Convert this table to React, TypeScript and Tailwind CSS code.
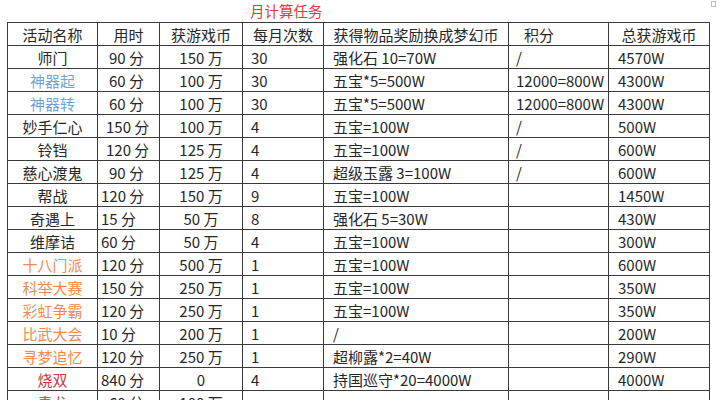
import React from 'react';

type Row = {
  name: string;
  color?: string;
  time: string;
  timePad: string;
  coins: string;
  times: string;
  reward: string;
  points: string;
  total: string;
};

const rows: Row[] = [
  { name: '师门', time: '90 分', timePad: 'pl-[11px]', coins: '150 万', times: '30', reward: '强化石 10=70W', points: '/', total: '4570W' },
  { name: '神器起', color: 'text-[#6fa3d8]', time: '60 分', timePad: 'pl-[11px]', coins: '100 万', times: '30', reward: '五宝*5=500W', points: '12000=800W', total: '4300W' },
  { name: '神器转', color: 'text-[#6fa3d8]', time: '60 分', timePad: 'pl-[11px]', coins: '100 万', times: '30', reward: '五宝*5=500W', points: '12000=800W', total: '4300W' },
  { name: '妙手仁心', time: '150 分', timePad: 'pl-[8px]', coins: '100 万', times: '4', reward: '五宝=100W', points: '/', total: '500W' },
  { name: '铃铛', time: '120 分', timePad: 'pl-[8px]', coins: '125 万', times: '4', reward: '五宝=100W', points: '/', total: '600W' },
  { name: '慈心渡鬼', time: '90 分', timePad: 'pl-[11px]', coins: '125 万', times: '4', reward: '超级玉露 3=100W', points: '/', total: '600W' },
  { name: '帮战', time: '120 分', timePad: 'pl-[3px]', coins: '150 万', times: '9', reward: '五宝=100W', points: '', total: '1450W' },
  { name: '奇遇上', time: '15 分', timePad: 'pl-[3px]', coins: '50 万', times: '8', reward: '强化石 5=30W', points: '', total: '430W' },
  { name: '维摩诘', time: '60 分', timePad: 'pl-[3px]', coins: '50 万', times: '4', reward: '五宝=100W', points: '', total: '300W' },
  { name: '十八门派', color: 'text-[#ee8a4e]', time: '120 分', timePad: 'pl-[3px]', coins: '500 万', times: '1', reward: '五宝=100W', points: '', total: '600W' },
  { name: '科举大赛', color: 'text-[#ee8a4e]', time: '150 分', timePad: 'pl-[3px]', coins: '250 万', times: '1', reward: '五宝=100W', points: '', total: '350W' },
  { name: '彩虹争霸', color: 'text-[#ee8a4e]', time: '120 分', timePad: 'pl-[3px]', coins: '250 万', times: '1', reward: '五宝=100W', points: '', total: '350W' },
  { name: '比武大会', color: 'text-[#ee8a4e]', time: '10 分', timePad: 'pl-[3px]', coins: '200 万', times: '1', reward: '/', points: '', total: '200W' },
  { name: '寻梦追忆', color: 'text-[#ee8a4e]', time: '120 分', timePad: 'pl-[3px]', coins: '250 万', times: '1', reward: '超柳露*2=40W', points: '', total: '290W' },
  { name: '烧双', color: 'text-[#d0383c]', time: '840 分', timePad: 'pl-[3px]', coins: '0', times: '4', reward: '持国巡守*20=4000W', points: '', total: '4000W' },
  { name: '青龙', color: 'text-[#d0383c]', time: '60 分', timePad: 'pl-[11px]', coins: '100 万', times: '', reward: '', points: '', total: '' },
];

const cell = 'border-[1.5px] border-[#3a3a3a] h-[23px] p-0 align-middle whitespace-nowrap';

export default function App() {
  return (
    <div
      className="w-[723px] h-[400px] overflow-hidden bg-white text-[#262626] text-[15px] leading-none"
      style={{ fontFamily: '"Noto Sans CJK SC", "Noto Sans", sans-serif' }}
    >
      {/* Title */}
      <div className="flex h-[22px] pl-[250px]">
        <span className="mt-[4px] text-[#e8383d] text-[14.5px]">月计算任务</span>
        <span className="ml-auto mr-[7px] mt-[1px] w-[5px] h-[6px] border border-[#bbb]" />
      </div>

      <table className="ml-[7px] w-[702px] table-fixed border-collapse">
        <colgroup>
          <col className="w-[90px]" />
          <col className="w-[62px]" />
          <col className="w-[83px]" />
          <col className="w-[81px]" />
          <col className="w-[185px]" />
          <col className="w-[100px]" />
          <col className="w-[101px]" />
        </colgroup>
        <thead>
          <tr>
            <th className={`${cell} font-normal text-center`}>活动名称</th>
            <th className={`${cell} font-normal text-center`}>用时</th>
            <th className={`${cell} font-normal text-center`}>获游戏币</th>
            <th className={`${cell} font-normal text-center`}>每月次数</th>
            <th className={`${cell} font-normal text-center`}>获得物品奖励换成梦幻币</th>
            <th className={`${cell} font-normal text-left pl-[15px]`}>积分</th>
            <th className={`${cell} font-normal text-center`}>总获游戏币</th>
          </tr>
        </thead>
        <tbody>
          {rows.map((r) => (
            <tr key={r.name}>
              <td className={`${cell} text-center ${r.color ?? ''}`}>{r.name}</td>
              <td className={`${cell} ${r.timePad}`}>{r.time}</td>
              <td className={`${cell} text-center`}>{r.coins}</td>
              <td className={`${cell} pl-[8px]`}>{r.times}</td>
              <td className={`${cell} pl-[9px]`}>{r.reward}</td>
              <td className={`${cell} pl-[7px]`}>{r.points}</td>
              <td className={`${cell} pl-[9px]`}>{r.total}</td>
            </tr>
          ))}
        </tbody>
      </table>
    </div>
  );
}
